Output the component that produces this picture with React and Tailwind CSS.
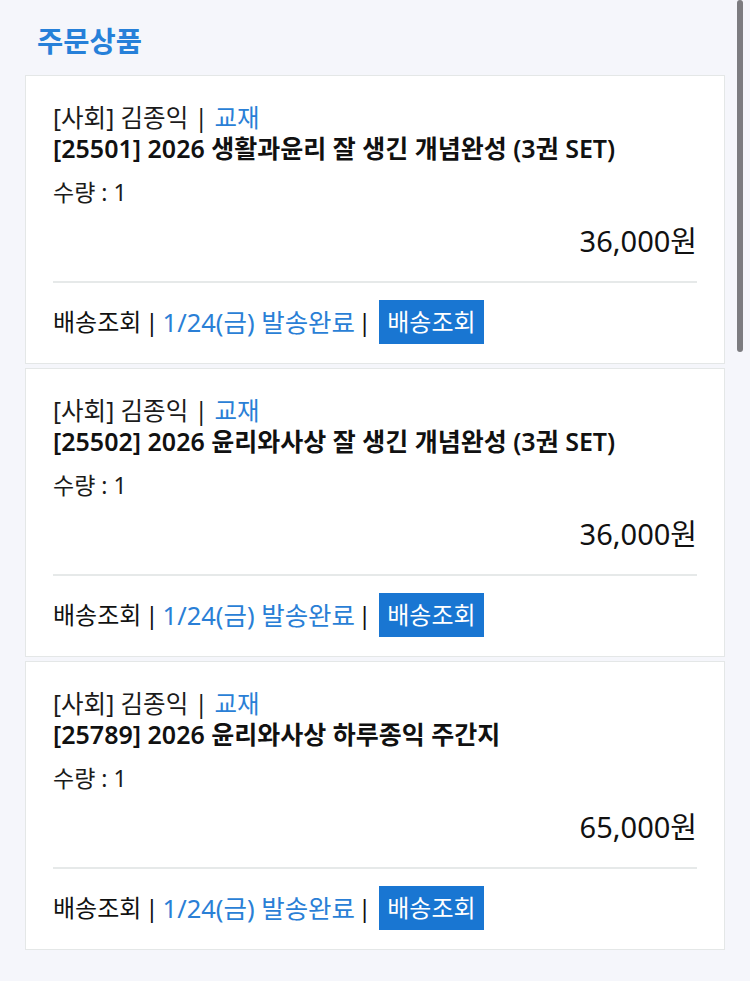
const items = [
  { code: '25501', name: '2026 생활과윤리 잘 생긴 개념완성 (3권 SET)', price: '36,000원' },
  { code: '25502', name: '2026 윤리와사상 잘 생긴 개념완성 (3권 SET)', price: '36,000원' },
  { code: '25789', name: '2026 윤리와사상 하루종익 주간지', price: '65,000원' },
];

const OrderCard = ({ item }) => (
  <div className="bg-white border border-[#e4e7e7] px-[27px] pt-[26px] pb-[19px]">
    <p className="text-[24.5px] leading-[31px] text-[#1b1b1b]">
      [사회] 김종익 | <span className="text-[#2a7fd6]">교재</span>
    </p>
    <p className="text-[25px] leading-[31px] font-semibold text-[#111]">
      [{item.code}] {item.name}
    </p>
    <p className="mt-[12px] text-[23px] leading-[32px] text-[#1b1b1b]">수량 : 1</p>
    <p className="mt-[15px] text-right text-[29px] leading-[36px] text-[#111]">{item.price}</p>
    <div className="mt-[22px] h-[2px] bg-[#e6e9e9]" />
    <div className="mt-[17px] flex items-center text-[24px] h-[44px]">
      <span className="text-[#111]">배송조회</span>
      <span className="ml-[4px] mr-[4px] text-[#111]">|</span>
      <span className="text-[25.5px] text-[#2a7fd6]">1/24(금) 발송완료</span>
      <span className="ml-[3px] mr-[8px] text-[#111]">|</span>
      <button className="h-[44px] px-[8px] bg-[#1976d2] text-white">배송조회</button>
    </div>
  </div>
);

export default function App() {
  return (
    <div
      className="relative min-h-screen bg-[#f5f6fb] px-[25px] pb-[32px]"
      style={{ fontFamily: '"Noto Sans", "Noto Sans CJK KR", sans-serif' }}
    >
      <h2 className="pt-[22px] pl-[12px] mb-[15px] text-[28.5px] leading-[38px] font-semibold text-[#2680d9]">
        주문상품
      </h2>
      <div className="flex flex-col gap-[4px]">
        {items.map((item) => (
          <OrderCard key={item.code} item={item} />
        ))}
      </div>
      <div className="absolute top-0 right-[7px] w-[6px] h-[352px] rounded-full bg-[#7c7c80]" />
    </div>
  );
}
